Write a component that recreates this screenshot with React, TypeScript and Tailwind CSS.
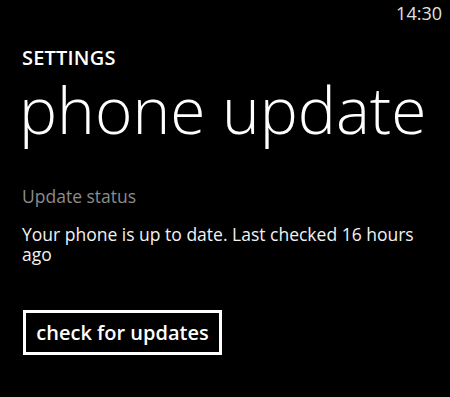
import React from "react";

export default function App() {
  return (
    <div
      className="w-[450px] h-[397px] bg-black text-white overflow-hidden"
      style={{ fontFamily: '"Open Sans", "Noto Sans", sans-serif' }}
    >
      <div className="flex justify-end pr-[8px] pt-[3px] h-[24px]">
        <span className="text-[18px] leading-[20px] text-[#e0e0e0]">14:30</span>
      </div>
      <div className="pl-[22px]">
        <div className="mt-[24px] text-[20px] leading-[20px] font-semibold tracking-[0.2px]">
          SETTINGS
        </div>
        <div className="mt-[10px] ml-[-3px] text-[64px] leading-[64px] font-light">
          phone update
        </div>
        <div className="mt-[44px] text-[17.5px] leading-[20px] text-[#8c8c8c]">
          Update status
        </div>
        <div className="mt-[18px] pr-[20px] text-[17.5px] leading-[20px] text-[#f2f2f2]">
          Your phone is up to date. Last checked 16 hours ago
        </div>
        <button className="mt-[46px] ml-[1px] w-[199px] h-[45px] border-[3px] border-white flex items-center justify-center text-[20px] font-semibold text-white">
          check for updates
        </button>
      </div>
    </div>
  );
}
